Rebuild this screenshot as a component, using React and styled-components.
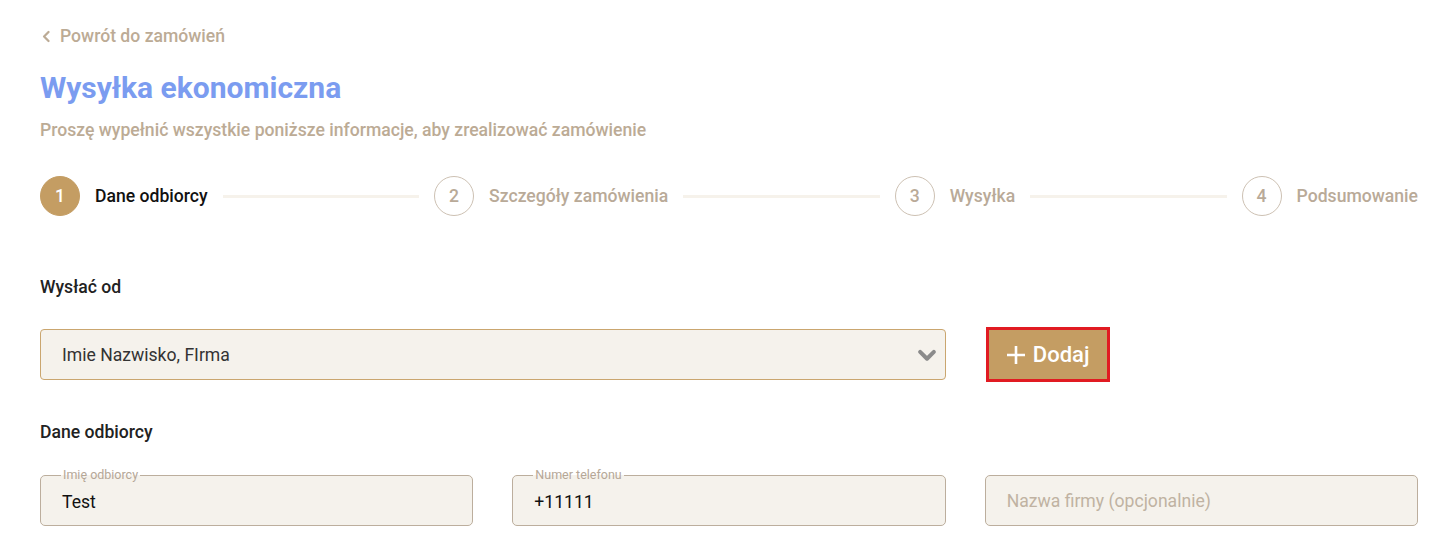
import React from 'react';
import styled, { createGlobalStyle } from 'styled-components';

const GlobalStyle = createGlobalStyle`
  body {
    margin: 0;
    background: #fff;
    font-family: Roboto, "Liberation Sans", sans-serif;
  }
`

const Page = styled('div')`
  padding: 24px 27px 0 40px;
`
const BackLink = styled('a')`
  display: inline-flex;
  align-items: center;
  gap: 7px;
  font-size: 17.6px;
  line-height: 24px;
  font-weight: 500;
  color: #bcab95;
  text-decoration: none;
`
const Title = styled('h1')`
  margin: 22px 0 0;
  font-size: 30px;
  line-height: 36px;
  font-weight: 700;
  color: #7b9cf0;
`
const Subtitle = styled('p')`
  margin: 12px 0 0;
  font-size: 17.6px;
  line-height: 24px;
  font-weight: 500;
  color: #bcab95;
`
const Stepper = styled('div')`
  display: flex;
  align-items: center;
  margin-top: 34px;
  height: 40px;
`
const Step = styled('div')`
  display: flex;
  align-items: center;
  gap: 15px;
  flex: none;
`
const Circle = styled('span')`
  width: 40px;
  height: 40px;
  box-sizing: border-box;
  border-radius: 50%;
  display: flex;
  align-items: center;
  justify-content: center;
  font-size: 17.6px;
  font-weight: 500;
  background: ${p => (p.$active ? '#c49d63' : '#fff')};
  border: 1px solid ${p => (p.$active ? '#c49d63' : '#cdc1b3')};
  color: ${p => (p.$active ? '#fff' : '#b9aa98')};
`
const StepLabel = styled('span')`
  font-size: 17.6px;
  font-weight: 500;
  color: ${p => (p.$active ? '#111' : '#b9aa98')};
`
const Line = styled('div')`
  flex: 1;
  height: 3px;
  background: #f6f2eb;
  margin: 0 15px;
`
const SectionTitle = styled('h3')`
  margin: ${p => p.$top}px 0 0;
  font-size: 17.6px;
  line-height: 24px;
  font-weight: 500;
  color: #222;
`
const Grid = styled('div')`
  display: grid;
  grid-template-columns: repeat(3, 1fr);
  column-gap: 39px;
  align-items: center;
  margin-top: ${p => p.$top}px;
`
const SelectBox = styled('div')`
  grid-column: span 2;
  height: 51px;
  box-sizing: border-box;
  display: flex;
  align-items: center;
  justify-content: space-between;
  padding: 0 8px 0 21px;
  background: #f5f2ec;
  border: 1px solid #caa66f;
  border-radius: 4px;
  font-size: 17.6px;
  color: #333;
`
const AddButton = styled('button')`
  justify-self: start;
  margin-left: 4px;
  height: 49px;
  width: 118px;
  display: flex;
  align-items: center;
  justify-content: center;
  gap: 7px;
  border: none;
  border-radius: 0;
  background: #c49d63;
  color: #fff;
  font-family: Roboto, "Liberation Sans", sans-serif;
  font-size: 22px;
  font-weight: 500;
  outline: 3px solid #e11b22;
  outline-offset: 0;
  cursor: pointer;
`
const Field = styled('div')`
  position: relative;
  height: 51px;
  box-sizing: border-box;
  display: flex;
  align-items: center;
  padding: 2px 21px 0;
  background: #f5f2ec;
  border: 1px solid #bcae9d;
  border-radius: 5px;
  font-size: 17.6px;
  color: ${p => (p.$placeholder ? '#c0b2a2' : '#111')};
  ${p => p.$placeholder && 'padding-top: 0;'}
`
const Legend = styled('span')`
  position: absolute;
  top: -8px;
  left: 20px;
  padding: 0 2px;
  font-size: 12.5px;
  line-height: 14px;
  color: #b5a797;
  background: linear-gradient(to bottom, #fff 50%, #f5f2ec 50%);
`

const Chevron = ({ size = 14, color = '#bcab95', dir = 'left', stroke = 2.5 }) => (
  <svg width={size} height={size} viewBox="0 0 16 16" fill="none" stroke={color} strokeWidth={stroke} strokeLinecap="round" strokeLinejoin="round">
    {dir === 'left' ? <path d="M10.5 2.5 5 8l5.5 5.5" /> : <path d="M2.5 5.5 8 11l5.5-5.5" />}
  </svg>
)

const steps = ['Dane odbiorcy', 'Szczegóły zamówienia', 'Wysyłka', 'Podsumowanie']

const App = () => {
  return (
    <Page>
      <GlobalStyle />
      <BackLink href="#">
        <Chevron size={13} stroke={2.8} />
        Powrót do zamówień
      </BackLink>
      <Title>Wysyłka ekonomiczna</Title>
      <Subtitle>Proszę wypełnić wszystkie poniższe informacje, aby zrealizować zamówienie</Subtitle>
      <Stepper>
        {steps.map((s, i) => (
          <React.Fragment key={s}>
            <Step>
              <Circle $active={i === 0}>{i + 1}</Circle>
              <StepLabel $active={i === 0}>{s}</StepLabel>
            </Step>
            {i < steps.length - 1 && <Line />}
          </React.Fragment>
        ))}
      </Stepper>
      <SectionTitle $top={59}>Wysłać od</SectionTitle>
      <Grid $top={30}>
        <SelectBox>
          Imie Nazwisko, FIrma
          <Chevron size={20} color="#8b8b8b" dir="down" stroke={3.2} />
        </SelectBox>
        <AddButton>
          <svg width="20" height="20" viewBox="0 0 20 20" stroke="#fff" strokeWidth="2.6">
            <path d="M10 1v18M1 10h18" />
          </svg>
          Dodaj
        </AddButton>
      </Grid>
      <SectionTitle $top={40}>Dane odbiorcy</SectionTitle>
      <Grid $top={31}>
        <Field>
          <Legend>Imię odbiorcy</Legend>
          Test
        </Field>
        <Field>
          <Legend>Numer telefonu</Legend>
          +11111
        </Field>
        <Field $placeholder>Nazwa firmy (opcjonalnie)</Field>
      </Grid>
    </Page>
  )
}

export default App;
